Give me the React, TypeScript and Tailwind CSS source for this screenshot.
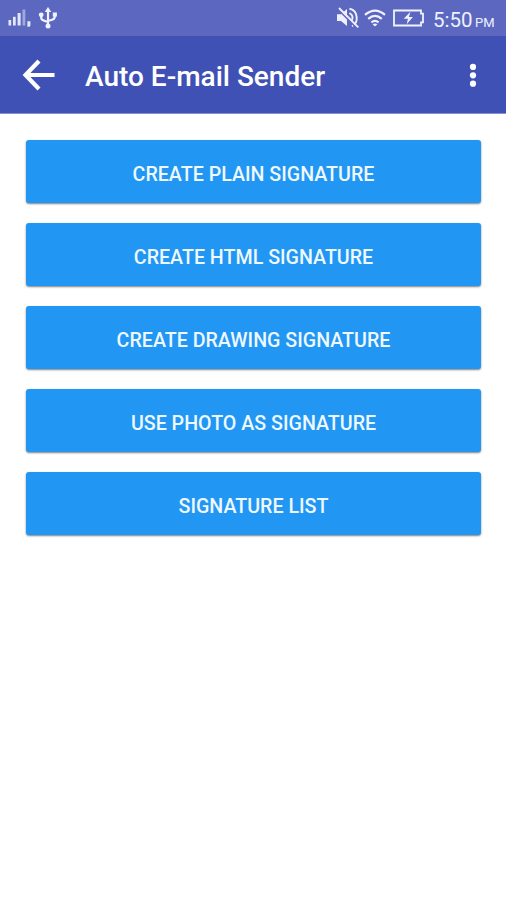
const actions = [
  'CREATE PLAIN SIGNATURE',
  'CREATE HTML SIGNATURE',
  'CREATE DRAWING SIGNATURE',
  'USE PHOTO AS SIGNATURE',
  'SIGNATURE LIST',
];

function SignalIcon() {
  return (
    <svg width="24" height="20" viewBox="0 0 24 20" fill="#e4e8fb">
      <rect x="0.5" y="12" width="2.7" height="5.5" />
      <rect x="5" y="8.8" width="2.7" height="8.7" />
      <rect x="9.6" y="5" width="3" height="12.5" />
      <rect x="14.5" y="1.5" width="2.8" height="16" opacity="0.5" />
      <path d="M19.4 13.2h3v4.3l-1 1.2h-2z" />
    </svg>
  );
}

function UsbIcon() {
  return (
    <svg width="20" height="22" viewBox="0 0 20 22" fill="none" stroke="#f0f2ff" strokeWidth="2.2">
      <path d="M10 3v16M3.2 8v2.5Q3.2 13 6 13.6L10 15M16.8 8v1.5Q16.8 12 14 12.7L10 14" />
      <circle cx="3.2" cy="7.8" r="2.4" fill="#f0f2ff" stroke="none" />
      <rect x="14.8" y="5.5" width="4.1" height="4.1" fill="#f0f2ff" stroke="none" />
      <path d="M10 0l3.3 5H6.7z" fill="#f0f2ff" stroke="none" />
      <circle cx="10" cy="19" r="2.5" fill="#f0f2ff" stroke="none" />
    </svg>
  );
}

function MutedIcon() {
  return (
    <svg width="24" height="22" viewBox="0 0 24 22" fill="none" stroke="#eef0ff" strokeWidth="1.9">
      <path d="M1 7.2h4l6-5.2v17l-6-5H1z" fill="#eef0ff" stroke="none" />
      <path d="M13.4 6q4.8 2.8 2.4 7.6M13.4 1.8c8.6 1.3 9.8 14 2.6 17.4" />
      <path d="M1.8 2.2L21 21.4" stroke="#5c68bf" strokeWidth="1.6" />
      <path d="M3 1L22.3 20.3" />
    </svg>
  );
}

function WifiIcon() {
  return (
    <svg width="22" height="18" viewBox="0 0 22 18" fill="none" stroke="#f0f2ff" strokeWidth="2.2">
      <path d="M1 5.8Q11-2.7 21 5.8" />
      <path d="M4.2 9.9Q11 4 17.8 9.9" />
      <path d="M7.4 13.4Q11 10.4 14.6 13.4" />
      <path d="M8.6 15.2Q11 13.6 13.4 15.2L11 17.5z" fill="#f0f2ff" stroke="none" />
    </svg>
  );
}

function BatteryIcon() {
  return (
    <svg width="32" height="18" viewBox="0 0 32 18" fill="none" stroke="#f0f2ff" strokeWidth="1.8">
      <path d="M1 1.5h27v3.2h2v8.6h-2v3.2H1z" />
      <path d="M17.4 2.8L10.7 9.7h4.2l-1.2 5.5 6.2-7.3h-4z" fill="#f0f2ff" stroke="none" />
    </svg>
  );
}

export default function App() {
  return (
    <div className="flex h-[900px] w-[506px] flex-col overflow-hidden bg-white font-['Roboto',sans-serif] text-white">
      <div className="flex h-9 shrink-0 items-center bg-[#5c68bf] pl-2">
        <SignalIcon />
        <div className="ml-[6px]"><UsbIcon /></div>
        <div className="ml-[278px]"><MutedIcon /></div>
        <div className="ml-[4px]"><WifiIcon /></div>
        <div className="ml-[7px]"><BatteryIcon /></div>
        <div className="ml-[8px] flex items-baseline whitespace-nowrap pt-[4px] text-[#eef0ff]">
          <span className="w-[42px] text-[20.5px] leading-6">5:50</span>
          <span className="text-[13px] leading-4">PM</span>
        </div>
      </div>
      <header className="flex h-[78px] shrink-0 items-center border-b border-[#8790d0] bg-[#3f51b5] pl-[22px]">
        <svg width="34" height="32" viewBox="0 0 34 32" fill="none" stroke="#fff" strokeWidth="4.2">
          <path d="M17 2L3.5 16 17 30M3.5 16H32.5" />
        </svg>
        <h1 className="ml-[29px] w-[384px] whitespace-nowrap pt-[5px] text-[28px] font-medium leading-8">Auto E-mail Sender</h1>
        <svg className="shrink-0" width="8" height="24" viewBox="0 0 8 24" fill="#fff">
          <circle cx="4" cy="3.9" r="3.1" />
          <circle cx="4" cy="12.3" r="3.1" />
          <circle cx="4" cy="20.7" r="3.1" />
        </svg>
      </header>
      <main className="flex flex-col gap-5 pl-[26px] pr-[25px] pt-[26px]">
        {actions.map((label) => (
          <button
            key={label}
            className="h-[63px] rounded-[3px] bg-[#2196f3] pt-[7px] text-[19.65px] font-medium leading-6 text-[#eef8ff] shadow-[0_1px_2px_rgba(0,0,0,0.5)]"
          >
            {label}
          </button>
        ))}
      </main>
    </div>
  );
}
